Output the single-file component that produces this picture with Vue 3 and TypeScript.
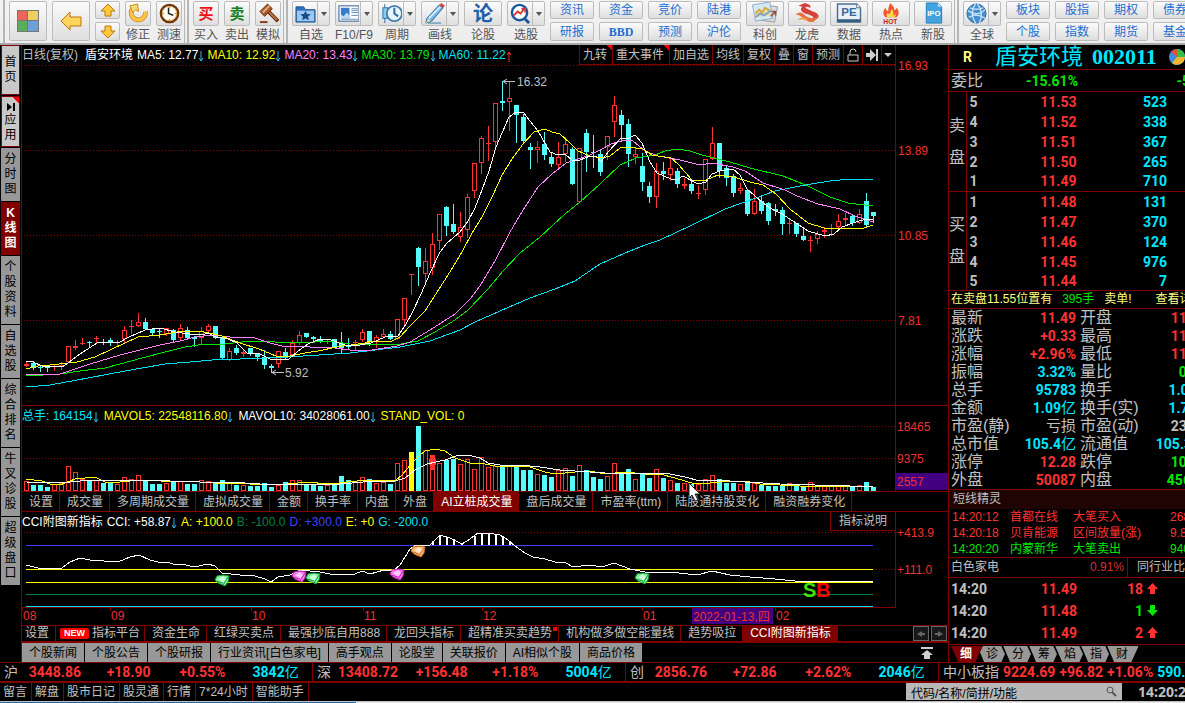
<script setup lang="ts">
type Tone = 'red' | 'green' | 'cyan' | 'grey'

interface Tool {
  icon: string
  label: string
  menu?: boolean
}

const icons: Record<string, string> = {
  cycle:
    '<path d="M5 5.500A7.500 7.500 0 1 0 18.300 9" fill="none" stroke="#c8881c" stroke-width="5"/><path d="M5 5.500A7.500 7.500 0 1 0 18.300 9" fill="none" stroke="#fcc54a" stroke-width="3.400"/><path d="M2 3l8-2 1 8-3-2-3 3z" fill="#fbd777" stroke="#c8881c"/>',
  clock:
    '<circle cx="11" cy="11" r="9" fill="#fff" stroke="#6d3208" stroke-width="2.600"/><circle cx="11" cy="11" r="7.600" fill="#fffef5" stroke="#d8a150"/><path d="M10 5v6l5 2" fill="none" stroke="#222" stroke-width="1.600"/><path d="M11 4v1M11 17v1M4 11h1M17 11h1" stroke="#555"/>',
  gavel:
    '<path d="M10 8l11 11" stroke="#5d2b12" stroke-width="4"/><path d="M10 8l10 10" stroke="#c4733a" stroke-width="2"/><path d="M2 9L10 1l5 5-8 8z" fill="#a85728" stroke="#6e3215"/><path d="M5 10l7-7" stroke="#e6ad7f" stroke-width="2"/><path d="M2 20h8" stroke="#873914" stroke-width="2"/>',
  folder:
    '<path d="M1 4h8l2 3h10v13H1z" fill="#2d6fbd" stroke="#1e568f"/><path d="M2 8h18v11H2z" fill="#9cc8f2"/><path d="M11 8l1.600 3.500 4 .3-3 2.600 1 3.800-3.600-2-3.600 2 1-3.800-3-2.600 4-.3z" fill="#174e86"/>',
  news:
    '<rect x="1" y="3" width="21" height="16" fill="#fff" stroke="#2e5d91"/><rect x="3" y="5" width="9" height="11" fill="#387bc8"/><path d="M3 12l3 2 3-4 3 3v3H3z" fill="#b9dcf6"/><path d="M14 6h7M14 8h7M14 10h7M14 13h7M3 17h18" stroke="#638db7"/>',
  period:
    '<path d="M4 1v20" stroke="#2470ae"/><rect x="2" y="5" width="5" height="11" fill="#8bd0ed" stroke="#2470ae"/><circle cx="14" cy="11" r="8" fill="#e7f6ff" stroke="#487eac" stroke-width="2"/><path d="M14 5v6l4 3" fill="none" stroke="#276b9d" stroke-width="2"/>',
  pencil:
    '<path d="M3 16L16 2l4 3L8 19l-6 2z" fill="#76b9e9" stroke="#245f93"/><path d="M5 16L17 4" stroke="#d3efff" stroke-width="2"/><path d="M16 2l2-2 4 3-2 2z" fill="#d9423c"/><path d="M2 21l2-5 3 3z" fill="#f1d3a2"/><path d="M4 21h14" stroke="#267cac"/>',
  pick:
    '<circle cx="10" cy="10" r="8" fill="#fff" stroke="#19569a" stroke-width="2.500"/><path d="M15 16l5 5" stroke="#19569a" stroke-width="3"/><path d="M4 13l4-4 3 2 4-5M12 6h4v4" fill="none" stroke="#d83932" stroke-width="2"/>',
  photos:
    '<path d="M13 3l14 2-3 16-15-2z" fill="#dcdcd7" stroke="#99a"/><path d="M1 3l18-3 3 17-18 3z" fill="#d2eaf8" stroke="#8eabc4"/><path d="M3 16l1-6 4-3 3 3 3-5 5 3 1 6z" fill="#e9d9a0"/><path d="M4 12l4-4 3 3 3-5 5 3" fill="none" stroke="#d6aa3f" stroke-width="2"/><path d="M4 16l5-4 4 2 7-5" fill="none" stroke="#7fa3c8" stroke-width="2"/><path d="M20 15l5-5m-4 0h4v4" fill="none" stroke="#944b34" stroke-width="1.500"/>',
  dragon:
    '<path d="M9 2l3-1 5 2 1 3-4-1-2 1 8 4q7 2 6 6-3 4-9 3 5-3 3-4-3-2-8-3Q5 9 9 5L5 4z" fill="#d5403a"/><path d="M2 13q5-4 9 0 4 4 9 4 3 0 5-3-1 6-6 7-6 0-10-5-3-3-7-3z" fill="#e9703c"/><path d="M4 19q4-5 9-2 2 1 2 3-5-3-11-1z" fill="#f0a048"/>',
  pe:
    '<path d="M2 2h20l4 4v15H2z" fill="#e8eff5" stroke="#506f8c" stroke-width="1.500"/><path d="M2 18h24v3H2z" fill="#355b7d"/><path d="M22 2v4h4" fill="#fff" stroke="#506f8c"/><text x="6" y="15" font-family="Liberation Sans" font-weight="700" font-size="12" fill="#336b9c">PE</text>',
  hot:
    '<path d="M13 1q6 5 4 8 2-1 3-3 4 6 0 10H8Q4 12 8 6q1 3 3 4 0-4 2-9z" fill="#f1592d"/><path d="M14 7q4 4 2 7 2 0 3-2 0 2-1 4h-8q-1-3 0-5 1 2 3 1 1-2 1-5z" fill="#ffd54c"/><text x="6" y="23" font-family="Liberation Sans" font-weight="700" font-size="7" fill="#c31919">HOT</text>',
  ipo:
    '<path d="M7 1h12l4 4v17H7z" fill="#43a2df" stroke="#237eba"/><path d="M19 1v4h4" fill="#b5e0f7"/><text x="8" y="15" font-family="Liberation Sans" font-weight="700" font-size="8" fill="#fff">IPO</text>',
  globe:
    '<circle cx="11" cy="11" r="10" fill="#458ecb" stroke="#2c6da5"/><path d="M2 8q9 7 18-1M3 15q8-5 17 1M10 1q-7 9 0 20M12 1q7 9 2 20M4 5q7 3 14 0" fill="none" stroke="#c5e4f9" stroke-width="1.400"/>',
}

const quick: Tool[] = [
  { icon: 'cycle', label: '修正' },
  { icon: 'clock', label: '测速' },
]
const views: Tool[] = [
  { icon: 'folder', label: '自选', menu: true },
  { icon: 'news', label: 'F10/F9', menu: true },
  { icon: 'period', label: '周期', menu: true },
  { icon: 'pencil', label: '画线', menu: true },
  { icon: 'glyph', label: '论股' },
  { icon: 'pick', label: '选股', menu: true },
]
const boards: Tool[] = [
  { icon: 'photos', label: '科创' },
  { icon: 'dragon', label: '龙虎' },
  { icon: 'pe', label: '数据' },
  { icon: 'hot', label: '热点' },
  { icon: 'ipo', label: '新股' },
]
const linksA = [['资讯', '研报'], ['资金', 'BBD'], ['竞价', '预测'], ['陆港', '沪伦']]
const linksB = [['板块', '个股'], ['股指', '指数'], ['期权', '期货'], ['债券', '基金']]

const rail = [
  { text: '首页', kind: 'light' },
  { text: '应用', kind: 'light app' },
  { text: '分时图', kind: '' },
  { text: 'K线图', kind: 'active' },
  { text: '个股资料', kind: '' },
  { text: '自选股', kind: '' },
  { text: '综合排名', kind: '' },
  { text: '牛叉诊股', kind: '' },
  { text: '超级盘口', kind: '' },
]

const averages = [
  { text: 'MA5: 12.77', color: 'white', up: false },
  { text: 'MA10: 12.92', color: 'yellow', up: false },
  { text: 'MA20: 13.43', color: 'pink', up: false },
  { text: 'MA30: 13.79', color: 'green', up: false },
  { text: 'MA60: 11.22', color: 'aqua', up: true },
]
const chartTools = ['九转', '重大事件', '加自选', '均线', '复权', '叠', '窗', '预测']

// direction, high, body top, body bottom, low, volume top
const raw = `r361,364,366,366,482 c361,363,368,369,485 c366,367,368,371,485 c366,367,368,371,487 r365,366,367,370,485 r362,365,367,369,484 r346,346,362,362,467 r340,346,348,349,473
r338,343,343,344,480 c341,342,342,346,481 r336,338,338,342,481 c339,342,342,344,483 c338,340,343,345,483 r340,342,342,345,485 r326,330,339,342,478 r320,326,326,333,480
r313,322,326,326,476 c318,322,329,329,481 c329,329,333,335,484 c329,331,331,337,484 r328,328,334,335,484 c329,330,340,341,481 r324,328,338,339,482 c327,330,338,339,484
c336,337,339,346,484 r327,331,338,343,481 r324,326,331,333,482 c326,326,338,338,483 c337,337,358,358,480 r348,351,360,360,484 c345,348,353,354,485 r350,352,354,356,486
c348,348,354,355,486 c353,354,357,360,486 c350,357,365,368,483 c364,366,368,372,487 r351,351,364,367,486 c348,352,356,358,482 r340,343,355,355,481 r331,335,343,344,481
c333,333,337,337,484 c336,337,339,340,485 c336,340,340,342,486 r340,341,341,343,486 c339,339,347,347,485 c332,343,348,352,476 c338,346,346,349,480 r340,342,342,350,482
r329,332,340,341,478 c331,331,342,345,479 r335,337,342,347,484 r329,334,337,337,483 c331,334,339,339,484 r319,319,339,339,464 r298,298,320,324,461 r274,274,274,294,452
c247,248,267,285,426 r248,261,274,284,451 r233,244,268,274,456 r214,214,241,249,464 c206,207,226,235,460 c204,224,232,233,459 r212,227,237,241,465 r194,197,230,237,460
r163,163,191,197,470 r136,138,163,173,458 r126,143,143,160,468 r103,103,142,146,467 c81,101,103,110,465 r82,98,102,130,467 c105,105,115,142,466 c114,117,141,142,470
c143,147,150,168,470 r141,147,150,162,475 c132,144,155,159,475 c153,157,164,166,477 r142,157,165,169,471 r137,144,154,161,469 c147,149,184,184,476 r148,148,202,202,466
c129,133,152,171,470 c135,152,152,167,477 c150,154,172,175,479 r136,136,147,159,477 r96,105,122,136,464 c110,115,125,139,473 c119,124,154,166,469 r148,154,157,163,480
c153,166,182,190,473 c182,186,197,202,478 r163,171,197,207,470 c162,171,174,179,478 r157,168,175,180,481 c168,171,184,187,483 r178,184,186,188,484 c180,184,191,193,484
r185,193,193,198,485 r159,159,190,194,480 r127,143,159,159,476 c143,143,171,177,479 c166,168,178,185,483 c174,176,193,196,483 r183,188,191,193,485 c190,190,214,215,483
r189,201,214,214,484 c196,201,211,213,485 c202,203,221,224,486 c204,209,211,215,486 c207,210,224,234,486 r219,223,223,233,484 c223,223,234,236,486 c229,236,240,240,486
r236,240,240,251,483 r231,234,239,243,486 r227,230,232,237,487 r224,228,228,235,487 r214,221,227,230,486 r213,218,220,225,487 c215,216,223,225,486 r209,214,223,223,486
c193,201,225,226,482 c212,212,216,222,487`

const candles = raw.split(/\s+/).map((item, i) => {
  const [high, top, bottom, low, vol] = item.slice(1).split(',').map(Number)
  return { x: 26 + 7 * i, up: item[0] === 'r', high, top, bottom, low, vol }
})

const lines = [
  { color: '#00e0f0', points: '26,387 50,385 88,378 125,371 165,364 190,362 212,360 240,359 288,357 350,353 400,347 430,341 460,330 475,322 500,311 530,298 555,289 575,281 600,264 625,253 645,245 660,240 690,226 725,209 745,202 775,191 805,185 830,181 850,179 873,179' },
  { color: '#00e600', points: '26,376 60,374 80,371 105,368 120,364 142,358 165,352 185,347 205,344 225,344 250,341 300,343 330,341 350,344 395,345 418,341 435,332 455,320 468,310 488,289 503,271 520,253 540,237 565,214 580,202 600,184 620,165 636,158 655,155 665,151 678,149 690,151 702,155 730,162 750,168 783,176 808,186 830,197 848,203 873,206' },
  { color: '#ff80ff', points: '26,374 60,374 75,369 90,364 120,355 140,350 160,345 180,341 195,337 213,335 230,337 255,338 270,343 282,346 310,347 335,348 350,350 372,350 397,346 410,342 430,330 455,314 470,299 480,286 495,261 510,232 525,207 538,187 552,174 566,163 590,155 600,150 611,144 625,140 633,141 645,151 658,156 680,160 700,165 712,163 733,167 745,171 763,183 785,190 797,196 818,204 840,209 855,216 873,222' },
  { color: '#ffff00', points: '26,369 38,366 50,365 77,362 95,357 112,349 138,337 160,335 177,332 200,331 213,334 222,336 240,343 259,349 276,356 290,356 305,353 318,351 342,346 351,345 365,343 372,341 392,341 400,337 410,326 425,311 432,300 448,275 462,252 472,233 482,217 493,195 502,175 512,159 523,144 534,132 545,129 552,132 560,134 570,143 578,151 590,156 602,158 610,156 620,148 628,147 643,149 652,155 671,158 678,164 692,180 706,180 718,175 734,177 750,182 763,185 776,194 790,209 808,223 824,228 850,229 864,228 873,225' },
  { color: '#ffffff', points: '26,361 33,362 42,366 62,367 68,363 80,354 97,343 120,342 129,337 145,330 160,328 175,332 189,334 202,335 208,333 216,337 228,339 237,343 247,353 258,353 270,359 289,359 298,351 308,344 320,339 328,339 345,345 360,345 371,343 385,337 398,336 406,324 412,313 421,294 430,273 440,252 447,243 460,232 468,221 475,208 482,190 489,171 496,147 502,133 509,117 516,112 523,112 530,121 538,131 550,152 558,155 565,154 573,161 580,160 590,156 597,157 601,162 608,152 621,138 629,138 635,135 642,143 650,162 657,173 671,179 678,179 683,176 698,184 706,182 712,174 720,171 733,169 740,175 747,189 763,203 772,209 782,214 796,223 808,231 825,236 834,234 842,227 856,222 866,219 873,219' },
]
const volLines = [
  { color: '#ffff00', points: '26,479 42,481 50,484 60,485 75,479 95,477 105,482 120,482 140,480 160,481 200,482 215,483 235,483 250,484 275,485 310,482 325,484 340,483 365,480 395,481 402,475 412,463 420,455 425,451 435,449 445,451 455,458 470,463 485,464 500,467 515,466 530,467 545,472 555,474 575,472 590,471 605,474 625,472 645,474 660,474 675,478 695,484 710,483 728,481 745,481 760,484 780,485 800,486 873,486' },
  { color: '#ffffff', points: '26,482 60,483 90,480 140,480 200,482 230,482 260,484 340,484 375,481 395,481 405,478 415,470 427,464 445,460 456,456 468,455 480,458 488,463 500,465 520,465 540,467 560,470 590,472 605,473 640,473 670,474 685,477 700,481 715,480 745,482 780,484 850,486 873,486' },
]
const cci = '26,565 38,568 62,568 70,562 80,558 90,560 118,562 130,557 139,555 150,560 158,562 168,562 175,565 182,564 194,567 208,564 215,566 222,573 240,575 255,576 265,579 271,582 278,577 290,575 300,570 320,572 330,574 355,574 362,571 370,574 384,570 394,570 400,565 410,549 416,545 430,545 440,535 450,538 462,544 470,539 478,533 488,533 500,535 508,540 515,546 525,553 533,557 545,559 555,562 566,563 573,567 590,565 602,567 614,563 630,569 650,573 670,572 697,575 712,571 730,575 750,577 775,579 795,581 830,582 850,581 873,581'
const cciTicks = [[432, 541], [439, 536], [446, 537], [453, 539], [461, 543], [474, 536], [481, 533], [488, 533], [495, 534], [502, 536], [509, 541]]
const levels = [
  { y: 545, color: '#4040ff' },
  { y: 569, color: '#ffff00' },
  { y: 582, color: '#ffff00' },
  { y: 594, color: '#008040' },
  { y: 606, color: '#00e0f0' },
]
const gems = [
  { x: 222, y: 580, dark: '#139c3c', light: '#7df59a' },
  { x: 299, y: 576, dark: '#c020b8', light: '#ff77f2' },
  { x: 313, y: 578, dark: '#139c3c', light: '#7df59a' },
  { x: 397, y: 574, dark: '#c020b8', light: '#ff77f2' },
  { x: 418, y: 551, dark: '#c46a20', light: '#ffb870' },
  { x: 642, y: 578, dark: '#139c3c', light: '#7df59a' },
]
const months = [['08', 23], ['09', 111], ['10', 252], ['11', 364], ['12', 483], ['01', 643], ['02', 776]] as const
const priceAxis = [['16.93', 65], ['13.89', 150], ['10.85', 235], ['7.81', 320]] as const

const volTabs = ['设置', '成交量', '多周期成交量', '虚拟成交量', '金额', '换手率', '内盘', '外盘', 'AI立桩成交量', '盘后成交量', '市盈率(ttm)', '陆股通持股变化', '融资融券变化']
const cciTabs = ['资金生命', '红绿买卖点', '最强抄底自用888', '龙回头指标', '超精准买卖趋势', '机构做多做空能量线', '趋势吸拉', 'CCI附图新指标']
const newsTabs = ['个股新闻', '个股公告', '个股研报', '行业资讯[白色家电]', '高手观点', '论股堂', '关联报价', 'AI相似个股', '商品价格']

const book = [
  ['5', '11.53', '523'], ['4', '11.52', '338'], ['3', '11.51', '367'], ['2', '11.50', '265'], ['1', '11.49', '710'],
  ['1', '11.48', '131'], ['2', '11.47', '370'], ['3', '11.46', '124'], ['4', '11.45', '976'], ['5', '11.44', '7'],
]

interface Stat {
  name: string
  value: string
  unit?: string
  tone: Tone
}
const stats: Stat[][] = [
  [{ name: '最新', value: '11.49', tone: 'red' }, { name: '开盘', value: '11.30', tone: 'red' }],
  [{ name: '涨跌', value: '+0.33', tone: 'red' }, { name: '最高', value: '11.58', tone: 'red' }],
  [{ name: '涨幅', value: '+2.96%', tone: 'red' }, { name: '最低', value: '11.21', tone: 'red' }],
  [{ name: '振幅', value: '3.32%', tone: 'cyan' }, { name: '量比', value: '0.78', tone: 'green' }],
  [{ name: '总手', value: '95783', tone: 'cyan' }, { name: '换手', value: '1.04%', tone: 'cyan' }],
  [{ name: '金额', value: '1.09', unit: '亿', tone: 'cyan' }, { name: '换手(实)', value: '1.72%', tone: 'cyan' }],
  [{ name: '市盈(静)', value: '', unit: '亏损', tone: 'grey' }, { name: '市盈(动)', value: '23.61', tone: 'grey' }],
  [{ name: '总市值', value: '105.4', unit: '亿', tone: 'cyan' }, { name: '流通值', value: '105.3', unit: '亿', tone: 'cyan' }],
  [{ name: '涨停', value: '12.28', tone: 'red' }, { name: '跌停', value: '10.04', tone: 'green' }],
  [{ name: '外盘', value: '50087', tone: 'red' }, { name: '内盘', value: '45696', tone: 'green' }],
]
const alerts = [
  { time: '14:20:12', name: '首都在线', event: '大笔买入', value: '26800', tone: 'red' },
  { time: '14:20:18', name: '贝肯能源', event: '区间放量(涨)', value: '9.86%', tone: 'red' },
  { time: '14:20:20', name: '内蒙新华', event: '大笔卖出', value: ' 9400', tone: 'green' },
]
const ticks = [
  { price: '11.49', vol: '18', up: true },
  { price: '11.48', vol: '1', up: false },
  { price: '11.49', vol: '2', up: true },
]
const detailTabs = ['细', '诊', '分', '筹', '焰', '指', '财']
const indices = [
  ['沪', '3448.86', '+18.90', '+0.55%', '3842'],
  ['深', '13408.72', '+156.48', '+1.18%', '5004'],
  ['创', '2856.76', '+72.86', '+2.62%', '2046'],
]
const services = ['留言', '解盘', '股市日记', '股灵通', '行情', '7*24小时', '智能助手']
</script>

<template>
  <div class="terminal">
    <header class="toolbar">
      <div class="group first">
        <button class="tile" aria-label="首页">
          <svg width="22" height="22" viewBox="0 0 22 22">
            <rect width="22" height="22" fill="#777" />
            <rect x="1" y="1" width="9" height="9" fill="#e8665c" /><rect x="11" y="1" width="10" height="9" fill="#f0cf62" />
            <rect x="1" y="11" width="9" height="10" fill="#59ad58" /><rect x="11" y="11" width="10" height="10" fill="#6d9fd8" />
          </svg>
        </button>
        <button class="tile" aria-label="返回">
          <svg width="22" height="20" viewBox="0 0 22 20"><path d="M1 10L10 1v5h11v9H10v4z" fill="#ffd45c" stroke="#bb7412" /></svg>
        </button>
        <div class="stack narrow">
          <button aria-label="上一个"><svg width="14" height="13" viewBox="0 0 14 13"><path d="M7 0l7 7h-4v5H4V7H0z" fill="#ffc93b" stroke="#ba7613" /></svg></button>
          <button aria-label="下一个"><svg width="14" height="13" viewBox="0 0 14 13"><path d="M7 13L0 6h4V1h6v5h4z" fill="#ffc93b" stroke="#ba7613" /></svg></button>
        </div>
        <button v-for="t in quick" :key="t.label" class="tool small">
          <span class="face"><svg class="pic" viewBox="0 0 22 22" v-html="icons[t.icon]" /></span>{{ t.label }}
        </button>
      </div>
      <div class="group">
        <button class="tool small"><span class="face trade buy">买</span>买入</button>
        <button class="tool small"><span class="face trade sell">卖</span>卖出</button>
        <button class="tool small"><span class="face"><svg class="pic" viewBox="0 0 22 22" v-html="icons.gavel" /></span>模拟</button>
      </div>
      <div class="group">
        <button v-for="t in views" :key="t.label" class="tool">
          <span class="face" :class="{ menu: t.menu }">
            <b v-if="t.icon === 'glyph'" class="glyph">论</b>
            <svg v-else class="pic" viewBox="0 0 22 22" v-html="icons[t.icon]" />
            <i v-if="t.menu"></i>
          </span>{{ t.label }}
        </button>
        <div v-for="pair in linksA" :key="pair[0]" class="stack">
          <button v-for="p in pair" :key="p" :class="{ bbd: p === 'BBD' }">{{ p }}</button>
        </div>
        <div class="boards">
          <button v-for="t in boards" :key="t.label" class="tool">
            <span class="face"><svg class="pic wide" viewBox="0 0 28 24" v-html="icons[t.icon]" /></span>{{ t.label }}
          </button>
        </div>
      </div>
      <div class="group last">
        <button class="tool">
          <span class="face menu"><svg class="pic" viewBox="0 0 22 22" v-html="icons.globe" /><i></i></span>全球
        </button>
        <div v-for="pair in linksB" :key="pair[0]" class="stack">
          <button v-for="p in pair" :key="p">{{ p }}</button>
        </div>
      </div>
    </header>

    <main class="body">
      <nav class="rail">
        <button v-for="r in rail" :key="r.text" :class="r.kind">
          <svg v-if="r.text === '应用'" width="8" height="8" viewBox="0 0 8 8"><path d="M0 0l5 4-5 4zM6 0h2v8H6z" /></svg>
          <span v-for="c in r.text" :key="c">{{ c }}</span>
        </button>
      </nav>

      <section class="charts">
        <div class="info">
          <span class="grey">日线(复权)</span>
          <span class="white name">盾安环境</span>
          <span v-for="m in averages" :key="m.text" :class="m.color">{{ m.text }}<svg class="tick" viewBox="0 0 5 11">
            <path v-if="m.up" d="M2 1v10M0 4l2-3 2 3" stroke="#ff3232" fill="none" />
            <path v-else d="M2 0v10M0 7l2 3 2-3" stroke="#30b8e8" fill="none" />
          </svg></span>
          <div class="chart-tools">
            <button v-for="(c, i) in chartTools" :key="c" :class="{ flag: i < 2 }">{{ c }}</button>
            <button aria-label="锁定"><svg width="12" height="14" viewBox="0 0 12 14"><path d="M1 7h10v6H1zM3 7V4q0-3 3-3t3 3" fill="none" stroke="#ccc" /></svg></button>
            <button aria-label="最新"><svg width="12" height="12" viewBox="0 0 12 12"><path d="M0 4h4V0l6 6-6 6V8H0zM10 0h2v12h-2z" fill="#ccc" /></svg></button>
            <button aria-label="更多" class="drop"><svg width="8" height="4" viewBox="0 0 8 4"><path d="M0 0h8L4 4z" fill="#ccc" /></svg></button>
          </div>
        </div>

        <svg class="plot" viewBox="22 65 926 340">
          <g class="dots">
            <path v-for="p in priceAxis" :key="p[0]" :d="`M24 ${p[1] + 0.5}H895`" />
          </g>
          <path class="frame" d="M895.500 64V405" />
          <text v-for="p in priceAxis" :key="p[0]" class="axis" x="898" :y="p[1] + 5">{{ p[0] }}</text>
          <g class="crisp">
            <g v-for="c in candles" :key="c.x">
              <template v-if="c.up">
                <rect :x="c.x" :y="c.high" width="1" :height="c.top - c.high" fill="#ff3232" />
                <rect :x="c.x" :y="c.bottom" width="1" :height="c.low - c.bottom + 1" fill="#ff3232" />
                <rect v-if="c.bottom - c.top > 2" :x="c.x - 1.5" :y="c.top + 0.5" width="4" :height="c.bottom - c.top - 1" fill="none" stroke="#ff3232" />
                <rect v-else :x="c.x - 2" :y="c.top" width="5" :height="Math.max(1, c.bottom - c.top)" fill="#ff3232" />
              </template>
              <template v-else>
                <rect :x="c.x" :y="c.high" width="1" :height="c.low - c.high + 1" fill="#54fcfc" />
                <rect :x="c.x - 2" :y="c.top" width="5" :height="Math.max(1, c.bottom - c.top)" fill="#54fcfc" />
              </template>
            </g>
            <polyline v-for="l in lines" :key="l.color" :points="l.points" :stroke="l.color" fill="none" />
          </g>
          <path d="M515 81.500H503M507 79l-4 2.500 4 2.500M284 372.500H272M276 370l-4 2.500 4 2.500" stroke="#c0c0c0" fill="none" />
          <text class="note" x="517" y="86">16.32</text>
          <text class="note" x="285" y="377">5.92</text>
        </svg>

        <div class="info vol-info">
          <span class="cyan">总手: 164154<svg class="tick" viewBox="0 0 5 11"><path d="M2 0v10M0 7l2 3 2-3" stroke="#30b8e8" fill="none" /></svg></span>
          <span class="yellow">MAVOL5: 22548116.80<svg class="tick" viewBox="0 0 5 11"><path d="M2 0v10M0 7l2 3 2-3" stroke="#30b8e8" fill="none" /></svg></span>
          <span class="white">MAVOL10: 34028061.00<svg class="tick" viewBox="0 0 5 11"><path d="M2 0v10M0 7l2 3 2-3" stroke="#30b8e8" fill="none" /></svg></span>
          <span class="yellow">STAND_VOL: 0</span>
        </div>
        <svg class="plot over" viewBox="22 425 926 66">
          <path class="dots" d="M24 426.500H895M24 458.500H895" />
          <path class="frame" d="M895.500 405V491" />
          <text class="axis" x="897" y="431">18465</text>
          <text class="axis" x="897" y="463">9375</text>
          <rect x="896" y="473" width="52" height="17" fill="#400080" />
          <text class="axis" x="897" y="486">2557</text>
          <g class="crisp">
            <template v-for="(c, i) in candles" :key="c.x">
              <rect v-if="i === 55" :x="c.x - 2" :y="c.vol" width="5" :height="491 - c.vol" fill="#ffff00" />
              <rect v-else-if="c.up" :x="c.x - 1.5" :y="c.vol - 0.5" width="4" :height="491 - c.vol" fill="none" stroke="#ff3232" />
              <rect v-else :x="c.x - 2" :y="c.vol" width="5" :height="491 - c.vol" fill="#54fcfc" />
            </template>
            <path d="M430 456h5v3h1v6h-1v5h-5v-5h-1v-6h1z" fill="#ff3232" />
            <polyline v-for="l in volLines" :key="l.color" :points="l.points" :stroke="l.color" fill="none" />
          </g>
          <path d="M689 483v15l3-3 3 6 3-1-3-6h5z" fill="#fff" stroke="#222" stroke-width="1" />
        </svg>

        <nav class="tabs vol-tabs">
          <button v-for="t in volTabs" :key="t" :class="{ on: t.startsWith('AI') }">{{ t }}</button>
        </nav>

        <div class="info cci-info">
          <span class="white">CCI附图新指标</span>
          <span class="white">CCI: +58.87<svg class="tick" viewBox="0 0 5 11"><path d="M2 0v10M0 7l2 3 2-3" stroke="#30b8e8" fill="none" /></svg></span>
          <span class="yellow">A: +100.0</span><span class="forest">B: -100.0</span><span class="blue">D: +300.0</span>
          <span class="yellow">E: +0</span><span class="aqua">G: -200.0</span>
          <button class="explain">指标说明</button>
        </div>
        <svg class="plot" viewBox="22 531 926 94">
          <path class="dots" d="M24 532.500H895M873 569.500H895" />
          <path class="frame" d="M22 607.500H895.500V531" />
          <text class="axis" x="897" y="537">+413.9</text>
          <text class="axis" x="897" y="574">+111.0</text>
          <rect v-for="l in levels" :key="l.y" x="26" :y="l.y" width="847" height="1" :fill="l.color" />
          <g class="crisp" stroke="#fff" fill="none">
            <polyline :points="cci" />
            <path v-for="t in cciTicks" :key="t[0]" :d="`M${t[0] + 0.5} ${t[1]}V545`" stroke-width="2" />
          </g>
          <g v-for="g in gems" :key="g.x" :transform="`translate(${g.x} ${g.y})`">
            <path d="M-7 0L-5-4 1-5 7-4 6 2 3 6-4 3z" :fill="g.light" :stroke="g.dark" />
            <path d="M-4-1l5-3 3 3-3 4z" fill="#fff" opacity="0.6" />
            <path d="M1 5l5-8M-6 1l7 2" :stroke="g.dark" fill="none" />
          </g>
          <text class="mark" x="803" y="597" fill="#40e000">S</text>
          <text class="mark" x="816" y="597" fill="#f00000">B</text>
          <g v-for="m in months" :key="m[0]">
            <path class="frame" :d="`M${m[1] - 0.5} 608v3`" />
            <text class="axis" :x="m[1]" y="620">{{ m[0] }}</text>
          </g>
          <rect x="692" y="608" width="81" height="16" fill="#400080" />
          <text class="axis" x="693" y="621">2022-01-13,四</text>
        </svg>

        <nav class="tabs cci-tabs">
          <button class="setup">设置</button>
          <button class="platform"><em>NEW</em>指标平台</button>
          <button v-for="t in cciTabs" :key="t" :class="{ on: t.startsWith('CCI'), spot: t.startsWith('超') }">{{ t }}</button>
          <div class="pager">
            <button aria-label="左移"><svg width="8" height="6" viewBox="0 0 8 6"><path d="M0 3l5-3v2h3v2H5v2z" fill="#666" /></svg></button>
            <button aria-label="右移"><svg width="8" height="6" viewBox="0 0 8 6"><path d="M8 3L3 0v2H0v2h3v2z" fill="#666" /></svg></button>
          </div>
        </nav>

        <nav class="news">
          <button v-for="t in newsTabs" :key="t">{{ t }}</button>
          <button class="lift" aria-label="展开"><svg width="12" height="12" viewBox="0 0 12 12"><path d="M0 0h12v2H0zM6 3l6 5H9v4H3V8H0z" fill="#d0d0d0" /></svg></button>
        </nav>
      </section>

      <aside class="quote">
        <div class="sheet">
          <h1 class="title">
            <span class="r">R</span><span class="stock">盾安环境</span><span class="code">002011</span>
            <svg width="18" height="18" viewBox="0 0 18 18">
              <circle cx="9" cy="9" r="8" fill="#3d8de0" /><path d="M9 9V1a8 8 0 0 1 8 8z" fill="#34c040" /><path d="M9 9h8a8 8 0 0 1-13 6z" fill="#f0b52c" /><path d="M9 9L3 4a8 8 0 0 1 6-3z" fill="#e65032" />
            </svg>
          </h1>
          <div class="ratio"><span>委比</span><b class="num green">-15.61%</b><b class="num green">-587</b></div>
          <table class="book">
            <tbody>
              <tr v-for="(b, i) in book" :key="i" :class="{ cut: i % 5 === 0 }">
                <th v-if="i % 5 === 0" rowspan="5"><span>{{ i ? '买' : '卖' }}</span><span>盘</span></th>
                <td class="num grey lvl">{{ b[0] }}</td>
                <td class="num red">{{ b[1] }}</td>
                <td class="num cyan">{{ b[2] }}</td>
                <td class="rest"></td>
              </tr>
            </tbody>
          </table>
          <p class="notice"><span>在卖盘11.55位置有</span><span class="green">395手</span><span>卖单!</span><a href="#">查看详情</a></p>
          <table class="stats">
            <tbody>
              <tr v-for="row in stats" :key="row[0].name">
                <template v-for="s in row" :key="s.name">
                  <th>{{ s.name }}</th>
                  <td class="num" :class="s.tone">{{ s.value }}<span v-if="s.unit">{{ s.unit }}</span></td>
                </template>
              </tr>
            </tbody>
          </table>
          <h2 class="sprite">短线精灵</h2>
          <ul class="alerts">
            <li v-for="a in alerts" :key="a.time" :class="a.tone"><span>{{ a.time }}</span><span>{{ a.name }}</span><span>{{ a.event }}</span><span>{{ a.value }}</span></li>
          </ul>
          <div class="sector"><span>白色家电</span><span class="pct">0.91%</span><a href="#">同行业比较</a></div>
          <ul class="deals">
            <li v-for="(t, i) in ticks" :key="i">
              <b class="num grey">14:20</b><b class="num red">{{ t.price }}</b>
              <b class="num" :class="t.up ? 'red' : 'green'">{{ t.vol }}</b>
              <svg width="11" height="12" viewBox="0 0 11 12">
                <path v-if="t.up" d="M5.500 0L11 6H8v5H3V6H0z" fill="#ff3232" />
                <path v-else d="M5.500 11L0 5h3V0h5v5h3z" fill="#00e600" />
              </svg>
            </li>
          </ul>
          <nav class="detail">
            <button v-for="(d, i) in detailTabs" :key="d" :class="{ on: i === 0 }"><span>{{ d }}</span></button>
          </nav>
        </div>
      </aside>
    </main>

    <section class="indices">
      <div v-for="x in indices" :key="x[0]" class="index">
        <span>{{ x[0] }}</span><b class="num red">{{ x[1] }}</b><b class="num red">{{ x[2] }}</b><b class="num red">{{ x[3] }}</b>
        <b class="num cyan">{{ x[4] }}<span>亿</span></b>
      </div>
      <div class="index small-board">
        <span>中小板指</span><b class="num red">9224.69</b><b class="num red">+96.82</b><b class="num red">+1.06%</b><b class="num cyan">590.2</b>
      </div>
    </section>

    <footer class="status">
      <button v-for="s in services" :key="s">{{ s }}</button>
      <label class="search">
        <input type="text" value="代码/名称/简拼/功能" aria-label="代码/名称/简拼/功能" />
        <svg width="11" height="11" viewBox="0 0 11 11"><circle cx="4" cy="4" r="3" fill="none" stroke="#555" /><path d="M6 6l4 4" stroke="#555" stroke-width="2" /></svg>
      </label>
      <time>14:20:24</time>
    </footer>
    <div class="edge"><i></i></div>
  </div>
</template>

<style>
body {
  margin: 0;
  background: #000;
  overflow: hidden;
}
</style>

<style scoped>
.terminal {
  font: 12px/16px "Liberation Sans", "Noto Sans CJK SC", sans-serif;
  color: #c0c0c0;
  background: #000;
  overflow: hidden;
}
.terminal * { box-sizing: border-box; }
button {
  margin: 0;
  padding: 0;
  border: 0;
  background: none;
  font: inherit;
  color: inherit;
  white-space: nowrap;
  flex: none;
}
svg { display: block; flex: none; }
ul { margin: 0; padding: 0; list-style: none; }
a { color: inherit; text-decoration: none; }
.white { color: #fff; }
.yellow { color: #ffff00; }
.pink { color: #ff80ff; }
.green { color: #00e600; }
.forest { color: #008040; }
.blue { color: #4040ff; }
.aqua { color: #00e0f0; }
.cyan { color: #00e5ff; }
.red { color: #ff3232; }
.grey { color: #c0c0c0; }
.num { font: bold 14px/16px Roboto, "Noto Sans CJK SC", sans-serif; }

/* toolbar */
.toolbar {
  display: flex;
  height: 45px;
  background: linear-gradient(#f4f4f4, #ececec);
  border-bottom: 2px solid #a8a8a8;
  color: #555;
}
.group {
  display: flex;
  flex: none;
  gap: 5px;
  padding: 1px 2px 0 4px;
  margin-right: 2px;
  border-left: 2px solid #b5b5b5;
  border-right: 1px solid #b5b5b5;
}
.group.first { margin-left: 3px; }
.group.last { margin-right: 0; border-right: 0; }
.tile, .face, .stack button {
  display: flex;
  align-items: center;
  justify-content: center;
  border: 1px solid #bcbcbc;
  border-radius: 2px;
  background: linear-gradient(#fbfbfb, #dedede);
}
.tile { width: 38px; height: 40px; }
.tool { width: 38px; line-height: 16px; text-align: center; }
.tool.small { width: 26px; }
.face { position: relative; height: 25px; margin-bottom: 1px; }
.pic { width: 21px; height: 21px; }
.pic.wide { width: 28px; height: 23px; }
.face.menu { justify-content: flex-start; padding-left: 2px; }
.face.menu i {
  display: flex;
  align-items: center;
  justify-content: center;
  align-self: stretch;
  flex: 1;
  margin-left: 1px;
  border-left: 1px solid #bcbcbc;
}
.face.menu i::before {
  content: "";
  border: 3px solid transparent;
  border-top: 4px solid #555;
  border-bottom: 0;
}
.glyph { font-size: 20px; color: #1d5fa8; }
.trade { font-size: 15px; font-weight: bold; }
.buy { color: #f01010; }
.sell { color: #108020; }
.stack { display: flex; flex-direction: column; gap: 3px; width: 44px; flex: none; }
.stack button { height: 18px; color: #1b6fd0; }
.stack button + button { height: 19px; }
.stack.narrow { width: 25px; }
.stack .bbd { font: bold 12px/16px "Liberation Serif", serif; }
.boards { display: flex; gap: 4px; }

/* page body */
.body { display: grid; grid-template-columns: 22px minmax(0, 1fr) 237px; }
.rail {
  display: flex;
  flex-direction: column;
  gap: 1px;
  padding-left: 1px;
  border-right: 1px solid #800000;
}
.rail button {
  display: flex;
  flex-direction: column;
  align-items: center;
  justify-content: center;
  min-height: 50px;
  width: 19px;
  padding: 4px 0;
  background: #989898;
  color: #000;
  line-height: 15px;
}
.rail .light { background: #c8c8c8; outline: 1px solid #800000; outline-offset: -1px; }
.rail .app { min-height: 51px; background: linear-gradient(225deg, #ff0000 6px, #c8c8c8 6px); }
.rail svg { margin: 2px 0; }
.rail .active { background: #800000; color: #fff; font-weight: bold; }
.charts { display: flex; flex-direction: column; min-width: 0; }
.info {
  display: flex;
  align-items: center;
  height: 20px;
  gap: 3px;
  white-space: nowrap;
}
.info > span { flex: none; }
.name { margin: 0 1px 0 4px; }
.tick { display: inline-block; width: 5px; height: 11px; vertical-align: -3px; margin-left: 1px; }
.chart-tools {
  display: flex;
  align-self: stretch;
  margin-left: auto;
  margin-right: 52px;
  border: solid #800000;
  border-width: 0 1px 1px 0;
}
.chart-tools button {
  display: flex;
  align-items: center;
  padding: 0 3px;
  border-left: 1px solid #800000;
}
.chart-tools .flag {
  padding: 0 5px 0 3px;
  background: linear-gradient(225deg, #ff0000 4px, transparent 4px);
}
.chart-tools .drop { padding: 0 3px 0 2px; }
.plot { width: 100%; height: auto; overflow: visible; }
.over { position: relative; z-index: 1; pointer-events: none; }
.dots { stroke: #900000; stroke-dasharray: 1 2; fill: none; }
.frame { stroke: #800000; fill: none; }
.crisp { shape-rendering: crispEdges; }
.axis { font-size: 12px; fill: #f03030; }
.note { font-size: 12px; fill: #c0c0c0; }
.mark { font: bold 20px "Liberation Sans", sans-serif; }
.vol-info { gap: 5px; border-top: 1px solid #800000; }
.cci-info { gap: 4px; border-top: 1px solid #800000; }
.explain {
  align-self: stretch;
  margin-left: auto;
  margin-right: 52px;
  padding: 0 8px;
  border: solid #800000;
  border-width: 0 1px 1px;
}
.tabs { display: flex; overflow: hidden; }
.tabs button { padding: 0 6px 0 7px; border-right: 1px solid #800000; }
.tabs .on { background: #800000; color: #fff; }
.vol-tabs { height: 20px; border-top: 1px solid #800000; }
.cci-tabs { height: 18px; border-top: 1px solid #800000; border-bottom: 2px solid #800000; line-height: 15px; }
.tabs .setup { padding: 0 6px 0 3px; }
.tabs .platform { display: flex; align-items: center; gap: 3px; padding: 0 4px; }
.platform em {
  padding: 0 4px;
  border-radius: 2px;
  background: #ff0000;
  color: #fff;
  font: bold 9px/11px "Liberation Sans", sans-serif;
}
.tabs .spot { background: linear-gradient(#f00, #f00) right 1px top 1px / 4px 4px no-repeat; }
.pager { display: flex; gap: 2px; margin-left: auto; margin-right: 1px; }
.tabs .pager button {
  width: 16px;
  padding: 0 3px;
  border: 1px solid #666;
  background: #181818;
}
.news { display: flex; gap: 1px; height: 19px; }
.news button { padding: 0 7px; background: #989898; color: #000; }
.news .lift { margin-left: auto; margin-right: 8px; background: none; }

/* quote panel */
.quote { min-width: 0; overflow: hidden; border-left: 1px solid #800000; }
.sheet { width: 258px; }
.title {
  display: flex;
  align-items: center;
  height: 25px;
  margin: 0;
  padding-left: 14px;
  border-bottom: 1px solid #800000;
  font: bold 22px/24px "Liberation Serif", "Noto Sans CJK SC", serif;
  color: #00e5ff;
}
.title .r { width: 32px; font: bold 14px/16px Roboto, sans-serif; color: #ffff80; }
.title .stock { width: 97px; font-size: 22px; font-weight: normal; }
.title svg { margin-left: 11px; }
.ratio {
  display: grid;
  grid-template-columns: 64px 63px 1fr;
  align-items: center;
  height: 21px;
  padding-left: 2px;
  font-size: 16px;
  text-align: right;
}
.ratio span { text-align: left; }
.ratio b:last-child { padding-right: 1px; }
.book, .stats { border-collapse: collapse; width: 100%; table-layout: fixed; }
.book td, .book th { height: 20px; padding: 0; text-align: right; }
.book tr:last-child td { height: 18px; }
.book .cut > * { border-top: 1px solid #800000; }
.book th { width: 17px; border-right: 1px solid #800000; font-size: 16px; font-weight: normal; text-align: left; }
.book th span { display: block; height: 32px; line-height: 32px; }
.book .lvl { width: 20px; padding-left: 3px; text-align: left; }
.book tr:first-child .rest { width: 40px; }
.notice {
  display: flex;
  height: 19px;
  margin: 0;
  padding-left: 2px;
  gap: 10px;
  align-items: center;
  border: solid #800000;
  border-width: 1px 0;
  color: #ffff80;
  white-space: nowrap;
}
.notice a { margin-left: 14px; }
.stats th { padding: 0; font-size: 16px; line-height: 18px; font-weight: normal; text-align: left; white-space: nowrap; }
.stats th:first-child { width: 63px; padding-left: 2px; }
.stats th:nth-child(3) { width: 66px; padding-left: 4px; }
.stats td { height: 18px; padding: 0; line-height: 18px; text-align: right; white-space: nowrap; }
.stats td:nth-child(2) { width: 64px; }
.stats td span { font-size: 15px; font-weight: normal; }
.sprite {
  margin: 0;
  height: 20px;
  padding-left: 4px;
  border-top: 1px solid #800000;
  background: #200404;
  font: inherit;
  line-height: 19px;
}
.alerts { height: 48px; }
.alerts li {
  display: grid;
  grid-template-columns: 58px 63px 97px 1fr;
  padding-left: 3px;
  white-space: nowrap;
}
.sector {
  display: grid;
  grid-template-columns: 100px 77px 1fr;
  height: 21px;
  line-height: 19px;
  border: solid #800000;
  border-width: 1px 0;
  padding-left: 2px;
}
.pct { padding-right: 3px; border-right: 1px solid #800000; color: #d83030; text-align: right; }
.sector a { padding-left: 9px; }
.deals li {
  display: grid;
  grid-template-columns: 60px 66px 66px 16px;
  align-items: center;
  height: 22px;
  padding-left: 2px;
  text-align: right;
}
.deals b:first-child { text-align: left; }
.deals svg { margin-left: 4px; }
.detail { display: flex; height: 18px; padding-top: 1px; border-top: 1px solid #800000; }
.detail button {
  position: relative;
  width: 34px;
  height: 17px;
  color: #000;
  background: #000;
  clip-path: polygon(0 0, 100% 0, 77% 100%, 23% 100%);
}
.detail button + button { margin-left: -8px; }
.detail button::before {
  content: "";
  position: absolute;
  inset: 0 0 0 2px;
  background: #989898;
  clip-path: polygon(0 0, 100% 0, 77% 100%, 23% 100%);
}
.detail button span { position: relative; }
.detail .on { z-index: 1; color: #fff; font-weight: bold; }
.detail .on::before { background: #800000; }

/* index strip */
.indices {
  display: grid;
  grid-template-columns: 313fr 313fr 313fr 246fr;
  height: 21px;
  border-top: 1px solid #800000;
  border-bottom: 2px solid #800000;
}
.index {
  display: grid;
  grid-template-columns: 14fr 74fr 74fr 74fr 73fr;
  align-items: center;
  min-width: 0;
  padding-left: 4px;
  border-right: 1px solid #800000;
  font-size: 14px;
  text-align: center;
  white-space: nowrap;
}
.index > span { text-align: left; }
.index b span { font-size: 14px; font-weight: normal; }
.small-board { display: flex; gap: 4px; border-right: 0; overflow: hidden; }

/* status bar */
.status { display: flex; height: 18px; overflow: hidden; }
.status > button { padding: 0 4px 0 3px; border-right: 1px solid #800000; }
.search {
  display: flex;
  align-items: center;
  width: 216px;
  height: 17px;
  margin-left: auto;
  padding: 0 5px;
  background: #b8b8b8;
}
.search input {
  flex: 1;
  min-width: 0;
  height: 17px;
  padding: 1px 0 0;
  border: 0;
  background: none;
  font: inherit;
  color: #000;
}
.status time {
  flex: none;
  width: 63px;
  padding-left: 16px;
  font: bold 14px/18px "Noto Sans", sans-serif;
  white-space: nowrap;
}
.edge { height: 2px; background: #e8e8e8; border-top: 1px solid #c0c0c0; }
.edge i { display: block; width: 30%; height: 1px; background: #2068a8; }
</style>
